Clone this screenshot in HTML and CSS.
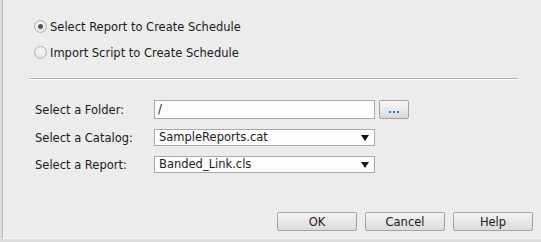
FILE: index.html
```html
<!DOCTYPE html>
<html lang="en">

<head>
    <meta charset="UTF-8">
    <title>Schedule</title>
    <link rel="stylesheet" href="styles.css">
</head>

<body>
    <div class="frame">
        <div class="options">
            <label class="option">
                <span class="radio checked"></span>
                Select Report to Create Schedule
            </label>
            <label class="option">
                <span class="radio"></span>
                Import Script to Create Schedule
            </label>
        </div>

        <div class="divider"></div>

        <div class="fields">
            <div class="row folder">
                <span class="label">Select a Folder:</span>
                <span class="textbox">/</span>
                <span class="browse"><i></i><i></i><i></i></span>
            </div>
            <div class="row">
                <span class="label">Select a Catalog:</span>
                <span class="dropdown">SampleReports.cat<b class="arrow"></b></span>
            </div>
            <div class="row">
                <span class="label">Select a Report:</span>
                <span class="dropdown">Banded_Link.cls<b class="arrow"></b></span>
            </div>
        </div>

        <div class="buttons">
            <button type="button" class="butn">OK</button>
            <button type="button" class="butn">Cancel</button>
            <button type="button" class="butn">Help</button>
        </div>
    </div>
</body>

</html>
```

FILE: styles.css
```css
html, body {
    margin: 0;
    height: 100%;
}

body {
    background-color: #dcdcdc;
    font-family: "DejaVu Sans", Verdana, sans-serif;
    font-size: 11.5px;
    color: #1a1a26;
}

.frame {
    margin-left: 2px;
    height: 238px;
    border-left: 1px solid #b9b9b9;
    background-color: #ececea;
    border-bottom: 1px solid #f6f6f6;
}

.options {
    padding: 20px 0 0 31px;
    display: flex;
    flex-direction: column;
    gap: 13px;
}

.option {
    display: flex;
    align-items: center;
    gap: 3px;
    height: 13px;
}

.radio {
    width: 11px;
    height: 11px;
    border-radius: 50%;
    border: 1px solid #b4b4b4;
    background: radial-gradient(circle at 50% 35%, #fafafa, #dcdcdc);
    position: relative;
}

.radio.checked::after {
    content: "";
    position: absolute;
    left: 3px;
    top: 3px;
    width: 5px;
    height: 5px;
    border-radius: 50%;
    background: #555;
}

.divider {
    margin: 19px 0 0 26px;
    width: 489px;
    height: 1px;
    background: #b2b2b2;
    border-bottom: 1px solid #ffffff;
}

.fields {
    padding: 20px 0 0 32px;
    display: flex;
    flex-direction: column;
    gap: 10px;
}

.row {
    display: flex;
    align-items: center;
    height: 17px;
}

.row.folder {
    height: 19px;
}

.label {
    width: 119px;
}

.textbox {
    box-sizing: border-box;
    width: 221px;
    height: 19px;
    border: 1px solid #a9a9a9;
    background: #fdfefd;
    padding: 1px 3px;
    line-height: 15px;
}

.browse {
    box-sizing: border-box;
    margin-left: 4px;
    width: 30px;
    height: 19px;
    border: 1px solid #a4a4a4;
    border-radius: 2px;
    background: linear-gradient(#f7f7f7, #e8e8e8 55%, #d8d8d8);
    display: flex;
    justify-content: center;
    align-items: flex-end;
    gap: 2px;
    padding-bottom: 5px;
}

.browse i {
    width: 2px;
    height: 2px;
    background: #2a7fc4;
}

.dropdown {
    box-sizing: border-box;
    width: 221px;
    height: 17px;
    border: 1px solid #a9a9a9;
    background: #fdfefd;
    padding: 0 4px;
    line-height: 15px;
    position: relative;
}

.arrow {
    position: absolute;
    right: 5px;
    top: 5px;
    width: 0;
    height: 0;
    border-left: 4px solid transparent;
    border-right: 4px solid transparent;
    border-top: 6px solid #111;
}

.buttons {
    display: flex;
    justify-content: flex-end;
    gap: 8px;
    padding: 39px 8px 0 0;
}

.butn {
    width: 80px;
    height: 19px;
    padding: 0;
    border: 1px solid #a4a4a4;
    border-radius: 2px;
    background: linear-gradient(#f4f4f4, #e6e6e6 50%, #dcdcdc);
    font-family: "DejaVu Sans", Verdana, sans-serif;
    font-size: 11.5px;
    color: #1a1a26;
}
```
